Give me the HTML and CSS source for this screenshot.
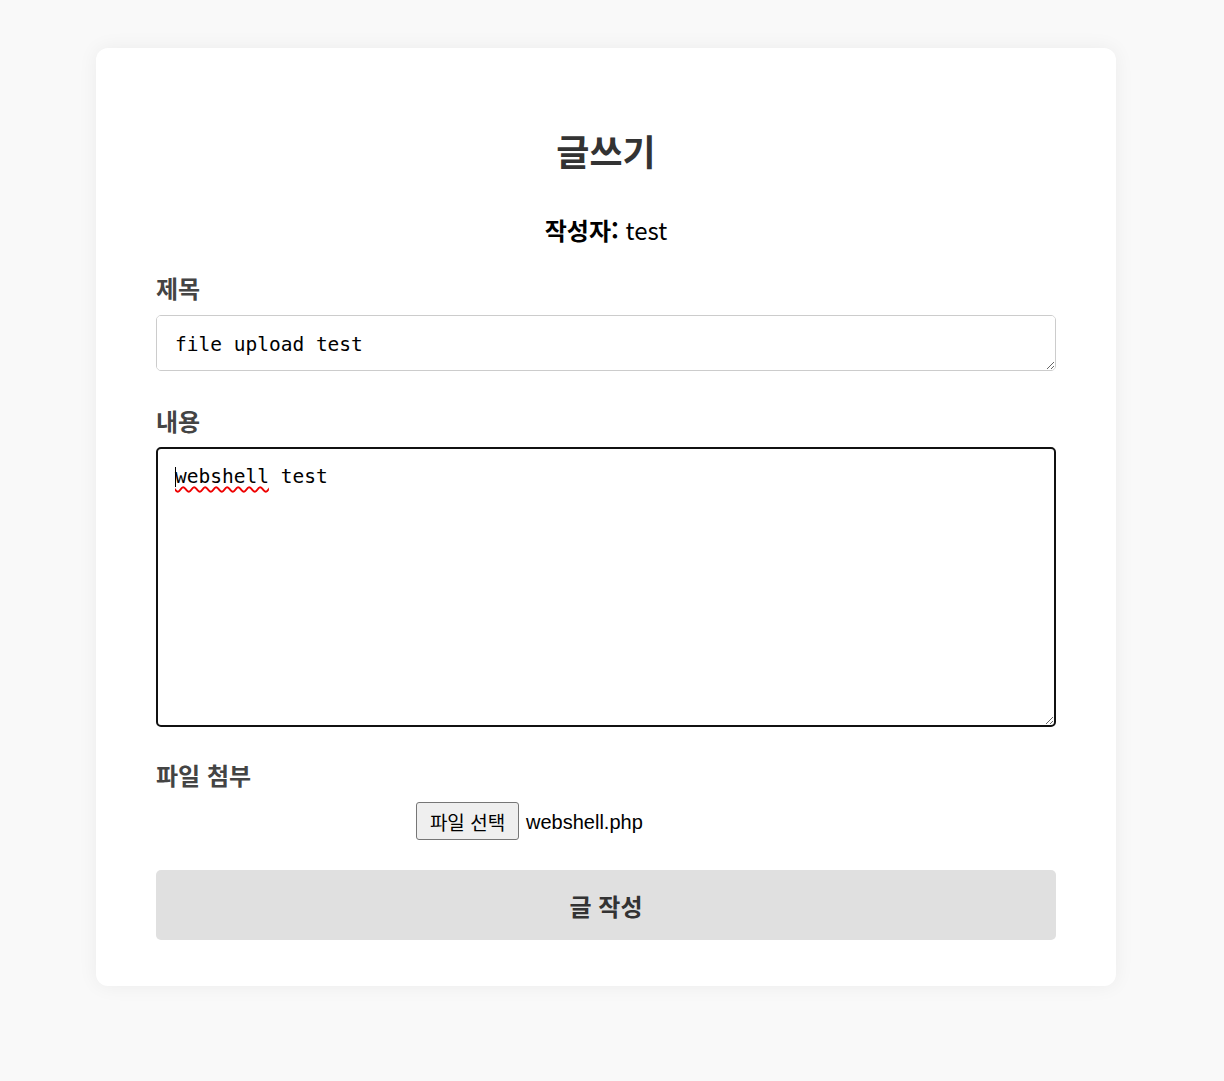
FILE: index.html
```
<!DOCTYPE html>
<html lang="ko">
<head>
<meta charset="utf-8">
<title>글쓰기</title>
<link rel="stylesheet" href="styles.css">
</head>
<body>
<div class="card">
  <h2 class="title">글쓰기</h2>
  <p class="author"><strong>작성자:</strong> test</p>
  <form class="form">
    <label class="label" for="subject">제목</label>
    <textarea id="subject" class="field field-subject">file upload test</textarea>

    <label class="label label-content" for="content">내용</label>
    <div class="field-wrap">
      <textarea id="content" class="field field-content" spellcheck="false">webshell test</textarea>
      <div class="overlay" aria-hidden="true"><span class="caret"></span><span class="misspelled">webshell</span></div>
    </div>

    <label class="label label-file">파일 첨부</label>
    <div class="file-row">
      <div class="file-input">
        <span class="file-btn">파일 선택</span>
        <span class="file-name">webshell.php</span>
      </div>
    </div>

    <button type="button" class="submit">글 작성</button>
  </form>
</div>
</body>
</html>
```
FILE: styles.css
```
html, body {
  margin: 0;
  padding: 0;
}
body {
  background: #f9f9f9;
  font-family: "Noto Sans CJK KR", "Noto Sans", sans-serif;
  color: #333;
  padding: 48px 12px 80px 0;
}
.card {
  box-sizing: border-box;
  width: 1020px;
  margin: 0 auto;
  background: #fff;
  border-radius: 12px;
  box-shadow: 0 0 20px rgba(0, 0, 0, 0.06);
  padding: 40px 60px 46px;
}
.title {
  margin: 38px 0 0;
  font-size: 36px;
  line-height: 48px;
  text-align: center;
  font-weight: 700;
  color: #333;
}
.author {
  margin: 41px 0 0;
  text-align: center;
  font-size: 24px;
  line-height: 30px;
  color: #000;
}
.author strong {
  font-weight: 700;
}
.form {
  display: flex;
  flex-direction: column;
}
.label {
  display: block;
  margin-top: 28px;
  font-size: 24px;
  line-height: 30px;
  font-weight: 700;
  color: #444;
}
.label-content {
  margin-top: 35px;
}
.label-file {
  margin-top: 33px;
}
.field {
  box-sizing: border-box;
  display: block;
  width: 100%;
  margin: 0;
  font-family: "DejaVu Sans Mono", monospace;
  font-size: 19.5px;
  color: #000;
  background: #fff;
  border: 1px solid #ccc;
  border-radius: 5px;
  padding: 17px 18px 15px;
  outline: none;
}
.field-subject {
  margin-top: 12px;
  height: 56px;
}
.field-wrap {
  position: relative;
  margin-top: 11px;
}
.field-content {
  height: 280px;
  border: 2px solid #111;
  padding: 16px 17px;
}
.overlay {
  position: absolute;
  top: 2px;
  left: 2px;
  padding: 16px 17px;
  font-family: "DejaVu Sans Mono", monospace;
  font-size: 19.5px;
  line-height: normal;
  color: transparent;
  pointer-events: none;
  white-space: pre;
}
.misspelled {
  text-decoration: underline wavy #e00;
  text-decoration-thickness: 1.5px;
  text-underline-offset: 3px;
}
.caret {
  display: inline-block;
  width: 0;
  height: 20px;
  border-left: 1px solid #000;
  vertical-align: -4px;
  margin-right: -1px;
}
.file-row {
  display: flex;
  justify-content: center;
  margin-top: 12px;
}
.file-input {
  width: 380px;
  display: flex;
  align-items: center;
  gap: 7px;
}
.file-btn {
  box-sizing: border-box;
  height: 38px;
  width: 103px;
  justify-content: center;
  display: flex;
  align-items: center;
  background: #efefef;
  border: 1px solid #767676;
  border-radius: 3px;
  font-size: 19px;
  color: #000;
}
.file-name {
  font-family: "Liberation Sans", Arial, sans-serif;
  font-size: 20px;
  color: #000;
  padding-top: 2px;
}
.submit {
  margin-top: 30px;
  height: 70px;
  width: 100%;
  border: none;
  border-radius: 5px;
  background: #e0e0e0;
  font-family: "Noto Sans CJK KR", sans-serif;
  font-size: 24px;
  font-weight: 700;
  color: #333;
}
```
